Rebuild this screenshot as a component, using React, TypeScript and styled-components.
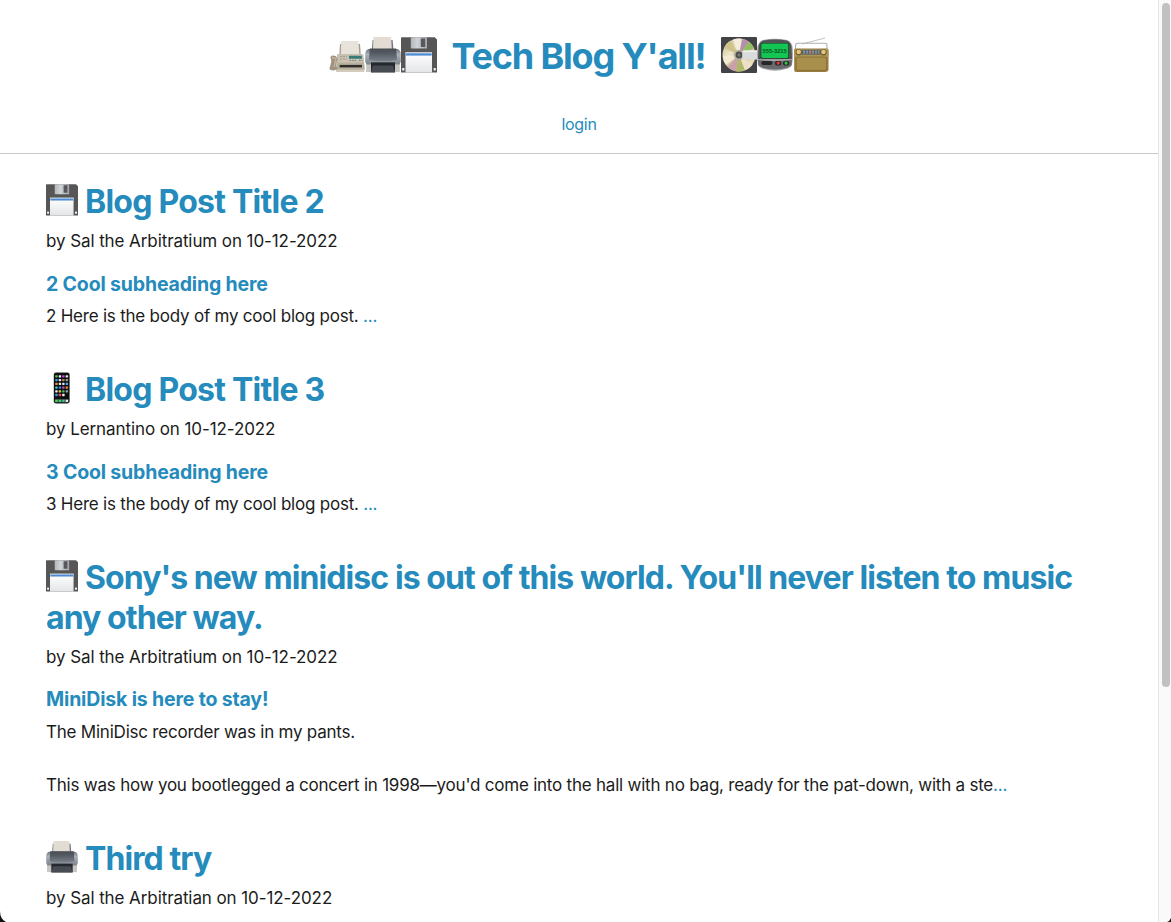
import React from "react";
import styled, { createGlobalStyle } from "styled-components";

const GlobalStyle = createGlobalStyle`
  * { box-sizing: border-box; }
  body {
    margin: 0;
    background: #fff;
    color: #1b1b1b;
    font-family: Inter, "Liberation Sans", sans-serif;
    overflow: hidden;
  }
  h1, h2, h3, p { margin: 0; }
  a { color: inherit; text-decoration: none; }
`;

const Window = styled.div`
  position: relative;
  display: flex;
  width: 1171px;
  height: 922px;
  overflow: hidden;
`;

const Page = styled.div`
  flex: 1;
  min-width: 0;
  height: 922px;
  overflow: hidden;
`;

const Header = styled.header`
  display: flex;
  flex-direction: column;
  align-items: center;
  height: 154px;
  padding-top: 34px;
  border-bottom: 1px solid #c9c9c9;
  color: #248bbc;
`;

const Brand = styled.h1`
  display: flex;
  align-items: center;
  height: 44px;
`;

const BrandText = styled.a`
  width: 284px;
  padding-right: 1px;
  text-align: center;
  white-space: nowrap;
  font-size: 36px;
  line-height: 44px;
  font-weight: 700;
  letter-spacing: -1.17px;
`;

const IconGroup = styled.span`
  display: flex;
  height: 36px;
  margin-bottom: 3px;
`;

const NavLink = styled.a`
  margin-top: 33px;
  font-size: 16px;
  line-height: 26px;
  letter-spacing: -0.3px;
`;

const Posts = styled.main`
  padding: 28px 46px 0;
`;

const Post = styled.article`
  margin-bottom: 40px;
`;

const Title = styled.h2<{ $spacing: number }>`
  font-size: 32px;
  line-height: 39.6px;
  font-weight: 700;
  color: #248bbc;
  letter-spacing: ${(p) => p.$spacing}px;
  svg {
    display: inline-block;
    vertical-align: -3px;
    margin-right: 7px;
  }
`;

const Meta = styled.p`
  margin-top: 6.6px;
  font-size: 17px;
  line-height: 26px;
  letter-spacing: -0.09px;
`;

const Subheading = styled.h3`
  margin-top: 17.6px;
  font-size: 19.5px;
  line-height: 24px;
  font-weight: 700;
  color: #248bbc;
  letter-spacing: -0.16px;
`;

const Body = styled.p`
  margin-top: 7.7px;
  font-size: 17px;
  line-height: 26.5px;
  letter-spacing: -0.22px;
  white-space: pre-line;
`;

const More = styled.a`
  color: #248bbc;
`;

const ScrollTrack = styled.div`
  width: 13px;
  height: 922px;
  padding: 3px 1px 0 3px;
  background: #fafafa;
  border-left: 1px solid #e6e6e6;
`;

const ScrollThumb = styled.div`
  width: 8px;
  height: 684px;
  border-radius: 4px;
  background: #c1c1c1;
`;

const Corner = styled.svg<{ $side: "left" | "right" }>`
  position: absolute;
  bottom: 0;
  ${(p) => p.$side}: 0;
`;

type IconProps = { size: number };

const Floppy = ({ size }: IconProps) => (
  <svg width={size} height={size} viewBox="0 0 36 36">
    <defs>
      <linearGradient id="floppyShutter">
        <stop offset="0" stopColor="#b3b7bb" />
        <stop offset=".4" stopColor="#d1d4d6" />
        <stop offset="1" stopColor="#a6aaae" />
      </linearGradient>
      <linearGradient id="floppyLabel" x2="0" y2="1">
        <stop offset="0" stopColor="#fff" />
        <stop offset="1" stopColor="#e4e5e8" />
      </linearGradient>
    </defs>
    <path d="M.5 .3H33.7L36 2.5V35.5H0V.8Z" fill="#565656" />
    <path d="M9.8 .3H26V11.6H11Q9.8 11.6 9.8 10.4Z" fill="url(#floppyShutter)" />
    <rect x="19.8" y="1.4" width="4.4" height="8.5" rx=".4" fill="#56585c" />
    <path d="M4.5 15.5H31V35.5H4.5Z" fill="url(#floppyLabel)" />
    <path d="M4.5 15.5H31V16.5H4.5Z" fill="#e8edf3" />
    <path d="M4.8 16.3H30.7V18.6H4.8Z" fill="#4c8bd4" />
    <rect x="1.2" y="31" width="2.2" height="2.4" rx=".5" fill="#f2f2f2" />
    <rect x="32.6" y="31" width="2.2" height="2.4" rx=".5" fill="#f2f2f2" />
  </svg>
);

const Printer = ({ size }: IconProps) => (
  <svg width={size} height={size} viewBox="0 0 36 36">
    <defs>
      <linearGradient id="printerBody" x2="0" y2="1">
        <stop offset="0" stopColor="#6e757e" />
        <stop offset=".35" stopColor="#a9b1ba" />
        <stop offset="1" stopColor="#7d848c" />
      </linearGradient>
      <linearGradient id="printerTop" x2="0" y2="1">
        <stop offset="0" stopColor="#484c53" />
        <stop offset=".35" stopColor="#555a62" />
        <stop offset="1" stopColor="#7c838c" />
      </linearGradient>
    </defs>
    <path d="M7 12 7.6 3H27.6L28.4 12Z" fill="#70757c" />
    <path d="M8.4 .4Q8.4 0 9 0H25.6Q26.2 0 26.2 .6L26.8 12H8Z" fill="#e2dcd3" />
    <path d="M1.2 27H34.8V35H1.2Z" fill="#c8c6c3" />
    <path d="M3.5 12H32.5Q35.5 13 35.8 17V24.5L34.6 27.5H1.4L.2 24.5V17Q.5 13 3.5 12Z" fill="url(#printerBody)" />
    <path d="M4.8 11.5H31.2L32 23Q18 26 4 23Z" fill="url(#printerTop)" />
    <path d="M6 25H30V35.2H6Z" fill="#25282c" />
    <path d="M8 28.4H28L30 35.4H6Z" fill="#474b52" />
    <path d="M5.8 25H30.2" stroke="#a6adb6" strokeWidth=".6" />
  </svg>
);

const Fax = ({ size }: IconProps) => (
  <svg width={size} height={size} viewBox="0 0 36 36">
    <path d="M10.3 18 11 7H31L31.8 18Z" fill="#a49d8f" />
    <path d="M12.3 4.4Q12.3 4 12.8 4H29.4L30.4 18H11.7Z" fill="#e8e3da" />
    <path d="M8.5 17H34L35.8 31 35 35H7.5L7 31Z" fill="#b9b09f" />
    <path d="M8.8 17H34L35.1 25.6H8Z" fill="#c9c1b1" />
    <path d="M1.4 20Q3 17.7 7 19.2L9 22.4 7.7 24.5 7 29.5Q9.3 30.4 8.5 32Q4.5 34.6.8 32.5 0 31.3 1.2 29L2.4 24Z" fill="#a0937f" />
    <path d="M3 20.5 7 21.6 5 30" fill="none" stroke="#c1b5a2" strokeWidth="1.3" />
    <path d="M20 18.8H32.7L33.1 21.7H20Z" fill="#397b79" />
    <path d="M11 19.4H18M11 22H18" stroke="#988e7d" strokeWidth=".8" strokeDasharray="2 1" />
    <path d="M20.5 23.4H28M30 23.4H33.3" stroke="#6c8178" strokeWidth="1" strokeDasharray="1.5 1" />
    <path d="M10.6 27.9H33V30.4H10.6Z" fill="#302e2c" />
    <path d="M7.5 32.7H35.3L35 35H7.6Z" fill="#d3cbbc" />
  </svg>
);

const Disc = ({ size }: IconProps) => (
  <svg width={size} height={size} viewBox="0 0 36 36">
    <defs>
      <linearGradient id="discShine" x2="1" y2="1">
        <stop offset="0" stopColor="#c2b68c" />
        <stop offset=".35" stopColor="#eee5cc" />
        <stop offset=".55" stopColor="#c9b590" />
        <stop offset=".8" stopColor="#e6dcbb" />
        <stop offset="1" stopColor="#a49c82" />
      </linearGradient>
    </defs>
    <rect width="36" height="36" rx="1" fill="#414347" />
    <circle cx="18" cy="18" r="16.5" fill="url(#discShine)" />
    <path d="M18 18 3 11Q5.5 5.5 10 3.6Z" fill="#cfc58c" />
    <path d="M18 18 12 2.7Q17 .8 21 2Z" fill="#f4eddc" />
    <path d="M18 18 21 2Q25 2.6 28 5.1Z" fill="#b590a8" />
    <path d="M18 18 28 5.1Q31 7 33 11Z" fill="#8fbf62" />
    <path d="M18 18 2 19Q2 24 5 28Z" fill="#f3ead2" />
    <path d="M18 18 7 30Q11 34 15 34.2Z" fill="#c9a0ac" />
    <path d="M18 18 15 34.2Q20 35 24 33Z" fill="#b0b768" />
    <path d="M18 18 24 33Q30 30.5 31.6 27Z" fill="#eee0c5" />
    <circle cx="18" cy="18" r="5.2" fill="#b6b19f" />
    <circle cx="18" cy="18" r="3.4" fill="#4c4c4c" />
    <circle cx="18" cy="18" r="1.8" fill="#77746d" />
    <path d="M22.4 13.5H36V22.5H22.4L21.4 21.5V14.5Z" fill="#d9dbde" />
    <path d="M22.4 13.5H36V15H22Z" fill="#f1f1f2" />
  </svg>
);

const PagerText = styled.text`
  font-family: "Liberation Sans", sans-serif;
  font-size: 5.8px;
  font-weight: 700;
  letter-spacing: -0.05px;
`;

const Pager = ({ size }: IconProps) => (
  <svg width={size} height={size} viewBox="0 0 36 36">
    <path d="M6 3Q18 .5 30 3 34.5 4.5 35.5 10 36.5 20 35 28 33.5 31 29 32 18 35.3 7 32 2.5 31 1 28-.5 20 .5 10 1.5 4.5 6 3Z" fill="#9ea0a3" />
    <path d="M6.5 3.5Q18 1.5 29.5 3.5 33.5 4.5 34.5 10L35 22H1L1.5 10Q2.5 4.5 6.5 3.5Z" fill="#505255" />
    <path d="M1 23Q18 25 35 23L34.5 28Q33 30 29 31 18 33.5 7 31 3 30 1.5 28Z" fill="#68696c" />
    <rect x="3.7" y="6" width="28.3" height="15.5" rx="1.7" fill="#17341e" />
    <rect x="4.3" y="6.6" width="27" height="14.3" rx="1.3" fill="#13c653" />
    <PagerText x="5.6" y="15.6" fill="#075323">555-3215</PagerText>
    <rect x="4.4" y="24.1" width="11" height="4" rx="1.8" fill="#252628" />
    <rect x="18" y="24" width="6.3" height="4.5" rx="2" fill="#28282a" />
    <rect x="26" y="24" width="6.3" height="4.5" rx="2" fill="#28282a" />
    <circle cx="21.2" cy="26.1" r="1.6" fill="#e9383a" />
    <circle cx="29.1" cy="26.1" r="1.6" fill="#33c63d" />
  </svg>
);

const Radio = ({ size }: IconProps) => (
  <svg width={size} height={size} viewBox="0 0 36 36">
    <path d="M9 7 32 1" stroke="#aeb1b2" strokeWidth=".8" />
    <path d="M2.5 13V8.5Q2.5 6.5 5 6.3H32Q34 6.3 34 8.5V13" fill="none" stroke="#aeb0ae" strokeWidth="1.1" />
    <path d="M2 11.5H34Q35.5 12 35.5 14V33Q35 35 32 35H4Q1.2 35 1.2 33V14Q1 12 2 11.5Z" fill="#9a7c3e" />
    <path d="M1.2 12H35.5V20H1.2Z" fill="#ad9554" />
    <path d="M8.5 12.7H27.8V17.7H8.5Z" fill="#5a6267" />
    <path d="M10 14.2H26.5M10 16H26.5" stroke="#bcc5c4" strokeWidth=".7" strokeDasharray="2 1" />
    <path d="M18.5 12.8V17.5" stroke="#c34d39" strokeWidth=".8" />
    <circle cx="5.7" cy="15.3" r="3.1" fill="#6a542b" />
    <circle cx="5.7" cy="15" r="2.3" fill="#e3c67d" />
    <circle cx="30.5" cy="15.3" r="3.1" fill="#6a542b" />
    <circle cx="30.5" cy="15" r="2.3" fill="#e3c67d" />
    <rect x="3.2" y="20.1" width="30.4" height="13.2" rx="1.2" fill="#a98f4c" stroke="#80652e" strokeWidth=".7" />
  </svg>
);

const appColors = [
  ["#58c956", "#f6f6f6", "#c84ee2", "#ededed"],
  ["#32a6e1", "#e3e5e5", "#b48b53", "#999"],
  ["#ed943c", "#dce9ee", "#e5e5e5", "#53a6e6"],
  ["#4cc3db", "#2e8ed9", "#ce49bc", "#ef8b2e"],
  ["#f6f6f6", "#efca37", "#42c265", "#9fa0a3"],
  ["#3198e8", "#ef4a4a", "#eee"],
];

const Phone = ({ size }: IconProps) => (
  <svg width={size} height={size} viewBox="0 0 36 36">
    <rect x="8.4" y=".3" width="18.5" height="35.4" rx="2.7" fill="#a5a6a8" />
    <rect x="9" y=".8" width="17.3" height="34.4" rx="2.3" fill="#0e0f12" />
    {appColors.map((row, y) =>
      row.map((color, x) => (
        <rect key={`${x}-${y}`} x={10.4 + x * 3.9} y={3.6 + y * 4.2} width="2.7" height="2.6" rx=".5" fill={color} />
      ))
    )}
    <rect x="9.8" y="30.4" width="15.8" height="4" rx="1" fill="#345047" />
    {["#53d755", "#45d46c", "#49bc91", "#e9f0ec"].map((color, x) => (
      <rect key={color} x={10.4 + x * 3.9} y="31.1" width="2.7" height="2.6" rx=".5" fill={color} />
    ))}
  </svg>
);

const posts = [
  {
    Icon: Floppy,
    title: "Blog Post Title 2",
    spacing: -0.76,
    author: "Sal the Arbitratium",
    sub: "2 Cool subheading here",
    body: "2 Here is the body of my cool blog post. ",
  },
  {
    Icon: Phone,
    title: "Blog Post Title 3",
    spacing: -0.76,
    author: "Lernantino",
    sub: "3 Cool subheading here",
    body: "3 Here is the body of my cool blog post. ",
  },
  {
    Icon: Floppy,
    title: "Sony's new minidisc is out of this world. You'll never listen to music any other way.",
    spacing: -0.92,
    author: "Sal the Arbitratium",
    sub: "MiniDisk is here to stay!",
    body: "The MiniDisc recorder was in my pants.\n\nThis was how you bootlegged a concert in 1998—you'd come into the hall with no bag, ready for the pat-down, with a ste",
  },
  { Icon: Printer, title: "Third try", spacing: -0.9, author: "Sal the Arbitratian" },
];

export default function App() {
  return (
    <Window>
      <GlobalStyle />
      <Page>
        <Header>
          <Brand>
            <IconGroup>
              <Fax size={36} />
              <Printer size={36} />
              <Floppy size={36} />
            </IconGroup>
            <BrandText href="#">Tech Blog Y'all!</BrandText>
            <IconGroup>
              <Disc size={36} />
              <Pager size={36} />
              <Radio size={36} />
            </IconGroup>
          </Brand>
          <NavLink href="#">login</NavLink>
        </Header>
        <Posts>
          {posts.map(({ Icon, title, spacing, author, sub, body }) => (
            <Post key={title}>
              <Title $spacing={spacing}>
                <Icon size={32} />
                <a href="#">{title}</a>
              </Title>
              <Meta>by {author} on 10-12-2022</Meta>
              {sub && <Subheading>{sub}</Subheading>}
              {body && (
                <Body>
                  {body}
                  <More href="#">...</More>
                </Body>
              )}
            </Post>
          ))}
        </Posts>
      </Page>
      <ScrollTrack>
        <ScrollThumb />
      </ScrollTrack>
      <Corner $side="left" width="6" height="11" viewBox="0 0 6 11">
        <path d="M0 0Q0 8 6 11H0Z" fill="#111" />
      </Corner>
      <Corner $side="right" width="4" height="4" viewBox="0 0 4 4">
        <path d="M4 0Q3 3 0 4H4Z" fill="#111" />
      </Corner>
    </Window>
  );
}
